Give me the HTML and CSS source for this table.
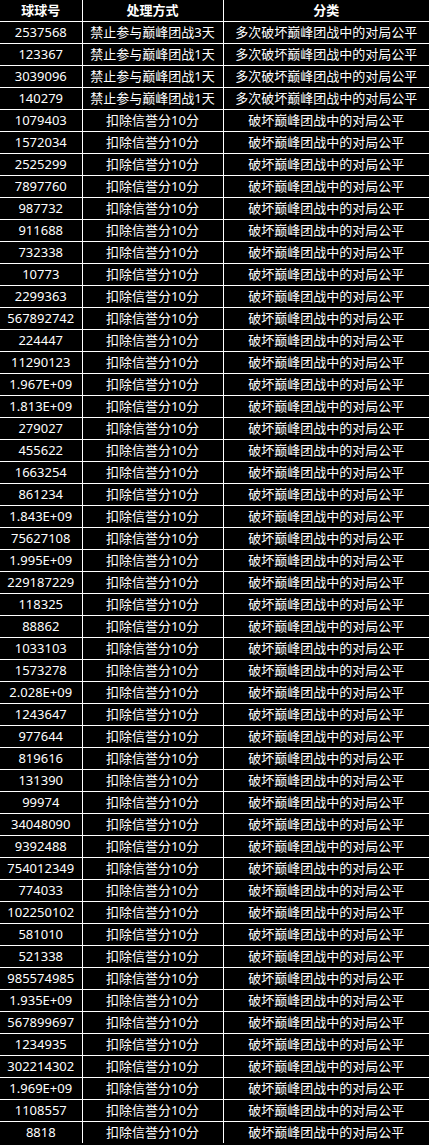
FILE: index.html
```html
<!DOCTYPE html>
<html lang="zh-CN">
<head>
<meta charset="utf-8">
<title>处理名单</title>
<link rel="stylesheet" href="styles.css">
</head>
<body>
<table class="sheet">
<colgroup><col class="c1"><col class="c2"><col class="c3"></colgroup>
<thead>
<tr><th>球球号</th><th>处理方式</th><th>分类</th></tr>
</thead>
<tbody>
<tr><td>2537568</td><td>禁止参与巅峰团战3天</td><td>多次破坏巅峰团战中的对局公平</td></tr>
<tr><td>123367</td><td>禁止参与巅峰团战1天</td><td>多次破坏巅峰团战中的对局公平</td></tr>
<tr><td>3039096</td><td>禁止参与巅峰团战1天</td><td>多次破坏巅峰团战中的对局公平</td></tr>
<tr><td>140279</td><td>禁止参与巅峰团战1天</td><td>多次破坏巅峰团战中的对局公平</td></tr>
<tr><td>1079403</td><td>扣除信誉分10分</td><td>破坏巅峰团战中的对局公平</td></tr>
<tr><td>1572034</td><td>扣除信誉分10分</td><td>破坏巅峰团战中的对局公平</td></tr>
<tr><td>2525299</td><td>扣除信誉分10分</td><td>破坏巅峰团战中的对局公平</td></tr>
<tr><td>7897760</td><td>扣除信誉分10分</td><td>破坏巅峰团战中的对局公平</td></tr>
<tr><td>987732</td><td>扣除信誉分10分</td><td>破坏巅峰团战中的对局公平</td></tr>
<tr><td>911688</td><td>扣除信誉分10分</td><td>破坏巅峰团战中的对局公平</td></tr>
<tr><td>732338</td><td>扣除信誉分10分</td><td>破坏巅峰团战中的对局公平</td></tr>
<tr><td>10773</td><td>扣除信誉分10分</td><td>破坏巅峰团战中的对局公平</td></tr>
<tr><td>2299363</td><td>扣除信誉分10分</td><td>破坏巅峰团战中的对局公平</td></tr>
<tr><td>567892742</td><td>扣除信誉分10分</td><td>破坏巅峰团战中的对局公平</td></tr>
<tr><td>224447</td><td>扣除信誉分10分</td><td>破坏巅峰团战中的对局公平</td></tr>
<tr><td>11290123</td><td>扣除信誉分10分</td><td>破坏巅峰团战中的对局公平</td></tr>
<tr><td>1.967E+09</td><td>扣除信誉分10分</td><td>破坏巅峰团战中的对局公平</td></tr>
<tr><td>1.813E+09</td><td>扣除信誉分10分</td><td>破坏巅峰团战中的对局公平</td></tr>
<tr><td>279027</td><td>扣除信誉分10分</td><td>破坏巅峰团战中的对局公平</td></tr>
<tr><td>455622</td><td>扣除信誉分10分</td><td>破坏巅峰团战中的对局公平</td></tr>
<tr><td>1663254</td><td>扣除信誉分10分</td><td>破坏巅峰团战中的对局公平</td></tr>
<tr><td>861234</td><td>扣除信誉分10分</td><td>破坏巅峰团战中的对局公平</td></tr>
<tr><td>1.843E+09</td><td>扣除信誉分10分</td><td>破坏巅峰团战中的对局公平</td></tr>
<tr><td>75627108</td><td>扣除信誉分10分</td><td>破坏巅峰团战中的对局公平</td></tr>
<tr><td>1.995E+09</td><td>扣除信誉分10分</td><td>破坏巅峰团战中的对局公平</td></tr>
<tr><td>229187229</td><td>扣除信誉分10分</td><td>破坏巅峰团战中的对局公平</td></tr>
<tr><td>118325</td><td>扣除信誉分10分</td><td>破坏巅峰团战中的对局公平</td></tr>
<tr><td>88862</td><td>扣除信誉分10分</td><td>破坏巅峰团战中的对局公平</td></tr>
<tr><td>1033103</td><td>扣除信誉分10分</td><td>破坏巅峰团战中的对局公平</td></tr>
<tr><td>1573278</td><td>扣除信誉分10分</td><td>破坏巅峰团战中的对局公平</td></tr>
<tr><td>2.028E+09</td><td>扣除信誉分10分</td><td>破坏巅峰团战中的对局公平</td></tr>
<tr><td>1243647</td><td>扣除信誉分10分</td><td>破坏巅峰团战中的对局公平</td></tr>
<tr><td>977644</td><td>扣除信誉分10分</td><td>破坏巅峰团战中的对局公平</td></tr>
<tr><td>819616</td><td>扣除信誉分10分</td><td>破坏巅峰团战中的对局公平</td></tr>
<tr><td>131390</td><td>扣除信誉分10分</td><td>破坏巅峰团战中的对局公平</td></tr>
<tr><td>99974</td><td>扣除信誉分10分</td><td>破坏巅峰团战中的对局公平</td></tr>
<tr><td>34048090</td><td>扣除信誉分10分</td><td>破坏巅峰团战中的对局公平</td></tr>
<tr><td>9392488</td><td>扣除信誉分10分</td><td>破坏巅峰团战中的对局公平</td></tr>
<tr><td>754012349</td><td>扣除信誉分10分</td><td>破坏巅峰团战中的对局公平</td></tr>
<tr><td>774033</td><td>扣除信誉分10分</td><td>破坏巅峰团战中的对局公平</td></tr>
<tr><td>102250102</td><td>扣除信誉分10分</td><td>破坏巅峰团战中的对局公平</td></tr>
<tr><td>581010</td><td>扣除信誉分10分</td><td>破坏巅峰团战中的对局公平</td></tr>
<tr><td>521338</td><td>扣除信誉分10分</td><td>破坏巅峰团战中的对局公平</td></tr>
<tr><td>985574985</td><td>扣除信誉分10分</td><td>破坏巅峰团战中的对局公平</td></tr>
<tr><td>1.935E+09</td><td>扣除信誉分10分</td><td>破坏巅峰团战中的对局公平</td></tr>
<tr><td>567899697</td><td>扣除信誉分10分</td><td>破坏巅峰团战中的对局公平</td></tr>
<tr><td>1234935</td><td>扣除信誉分10分</td><td>破坏巅峰团战中的对局公平</td></tr>
<tr><td>302214302</td><td>扣除信誉分10分</td><td>破坏巅峰团战中的对局公平</td></tr>
<tr><td>1.969E+09</td><td>扣除信誉分10分</td><td>破坏巅峰团战中的对局公平</td></tr>
<tr><td>1108557</td><td>扣除信誉分10分</td><td>破坏巅峰团战中的对局公平</td></tr>
<tr><td>8818</td><td>扣除信誉分10分</td><td>破坏巅峰团战中的对局公平</td></tr>
</tbody>
</table>
</body>
</html>
```
FILE: styles.css
```css
html, body {
  margin: 0;
  padding: 0;
  background: #000;
}

.sheet {
  width: 429px;
  table-layout: fixed;
  border-collapse: collapse;
  border-style: hidden;
  background: #000;
  color: #fff;
  font-family: "Noto Sans", "Noto Sans CJK SC", sans-serif;
  font-size: 13px;
}

.c1 { width: 82px; }
.c2 { width: 141px; }
.c3 { width: 206px; }

.sheet th,
.sheet td {
  border: 1px solid #fff;
  height: 21px;
  padding: 0;
  text-align: center;
  vertical-align: middle;
  white-space: nowrap;
  line-height: 21px;
}

.sheet th {
  font-weight: bold;
}
```
